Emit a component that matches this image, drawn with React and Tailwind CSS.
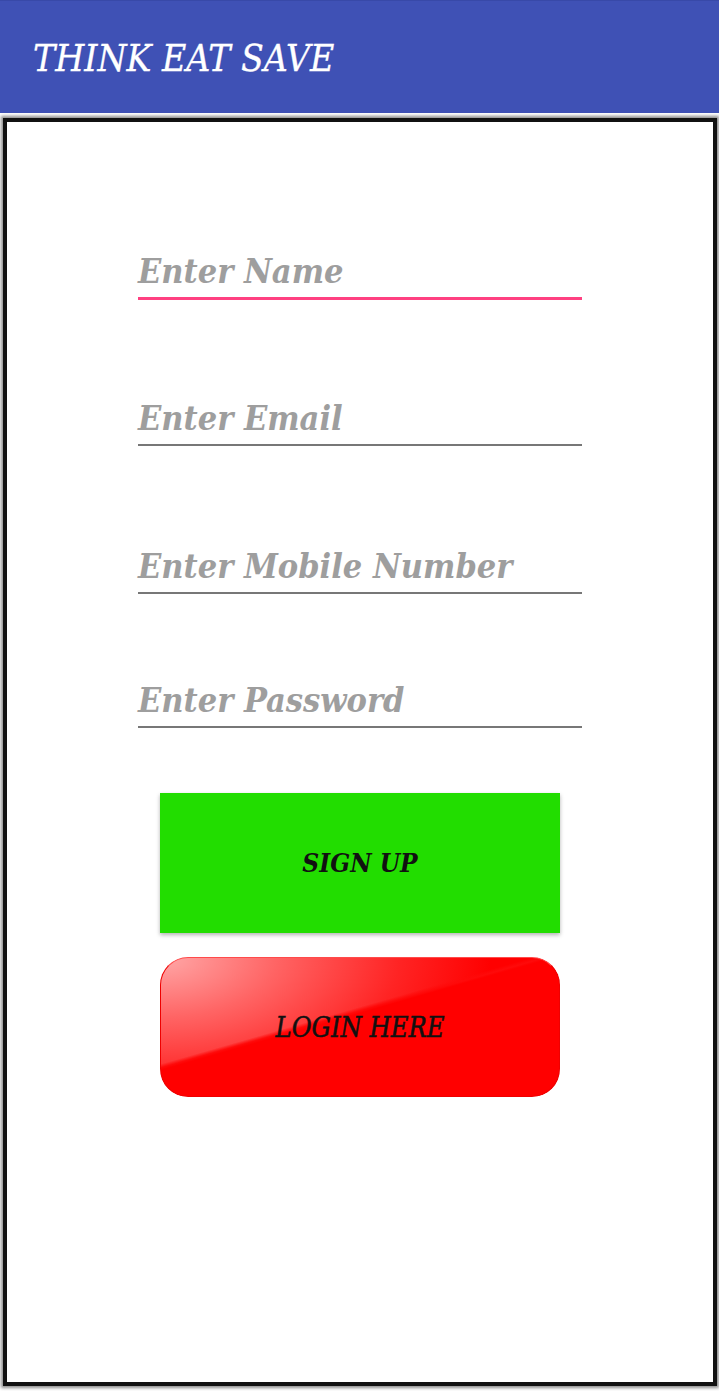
import React from 'react';

const serif = "font-['DejaVu_Serif_Condensed','DejaVu_Serif',serif] italic";

const Field = ({ placeholder, active = false, className = '' }) => (
  <div
    className={`flex h-[56px] items-end pb-[9px] ${
      active ? 'border-b-[3px] border-[#ff4081]' : 'border-b-2 border-[#777777]'
    } ${className}`}
  >
    <span className={`${serif} text-[34px] leading-none font-bold text-[#9e9e9e]`}>
      {placeholder}
    </span>
  </div>
);

const App = () => {
  return (
    <div className="w-[719px] h-[1391px] bg-white overflow-hidden">
      {/* Toolbar */}
      <div className="h-[113px] bg-[#3f51b5] flex items-center pl-[33px] border-t border-[#3849a8]">
        <h1 className={`${serif} text-[37px] leading-none text-white pt-[2px] [-webkit-text-stroke:0.3px_#ffffff]`}>
          THINK EAT SAVE
        </h1>
      </div>

      {/* Framed form */}
      <div className="ml-[3px] mr-[2px] mt-[5px] h-[1268px] border-[4px] border-[#111111] shadow-[0_0_3px_2px_rgba(0,0,0,0.45)]">
        <div className="w-[444px] mx-auto pt-[122px]">
          <Field placeholder="Enter Name" active />
          <Field placeholder="Enter Email" className="mt-[90px]" />
          <Field placeholder="Enter Mobile Number" className="mt-[92px]" />
          <Field placeholder="Enter Password" className="mt-[78px]" />

          <div className="w-[400px] mx-auto mt-[65px] flex flex-col gap-[24px]">
            <button className="h-[140px] bg-[#22dd00] shadow-[0_2px_4px_rgba(0,0,0,0.3)] flex items-center justify-center">
              <span className={`${serif} text-[26px] font-bold text-[#111111] leading-none`}>SIGN UP</span>
            </button>
            <button className="h-[140px] rounded-[28px] border border-[#ee0000] border-t-[#ff4a4a] bg-[linear-gradient(164deg,rgba(255,0,0,0)_42%,#ff0a0a_43.5%,#ff0000_44.5%),radial-gradient(ellipse_330px_170px_at_0_0,#ffa8a8_0%,#ff6464_35%,#ff2424_72%,#ff0000_100%)] flex items-center justify-center">
              <span className={`${serif} text-[27px] text-[#111111] leading-none [-webkit-text-stroke:0.5px_#111111]`}>
                LOGIN HERE
              </span>
            </button>
          </div>
        </div>
      </div>
    </div>
  );
};

export default App;
